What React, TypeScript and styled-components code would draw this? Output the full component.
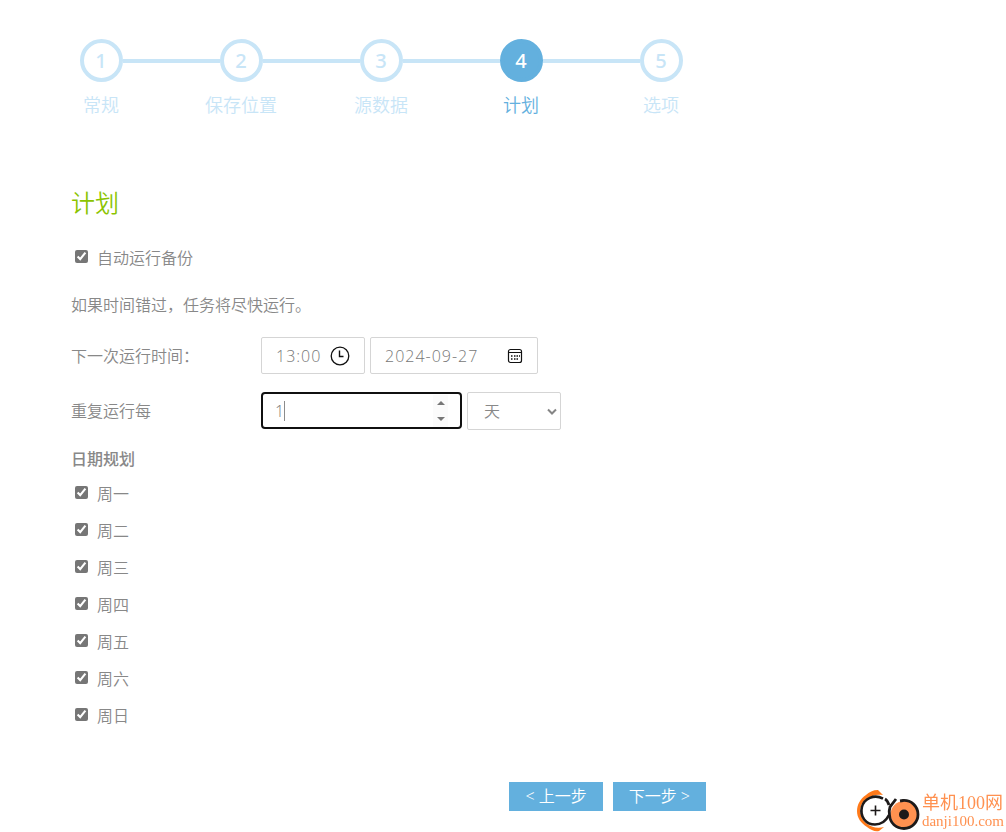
import React, { useState } from "react";
import styled, { createGlobalStyle, css } from "styled-components";

const GlobalStyle = createGlobalStyle`
  *, *::before, *::after { box-sizing: border-box; }
  body {
    margin: 0;
    background: #fff;
    color: #888;
    font-family: "Open Sans", "Noto Sans CJK SC", sans-serif;
    font-size: 16px;
    font-weight: 350;
    line-height: 24px;
  }
  button, input, select { font: inherit; color: inherit; }
`;

const Page = styled.div`
  min-height: 100vh;
  padding: 39px 31px 21px;
`;

const Steps = styled.ol`
  display: flex;
  max-width: 700px;
  margin: 0;
  padding: 0;
  list-style: none;
`;

const Step = styled.li<{ $active: boolean }>`
  flex: 1;
  text-align: center;
  font-size: 18px;
  color: ${(p) => (p.$active ? "#63b0de" : "#c8e5f7")};
`;

const Track = styled.div`
  display: flex;
  align-items: center;
  margin-bottom: 11px;
`;

const Line = styled.span<{ $hidden: boolean }>`
  flex: 1;
  height: 4px;
  background: ${(p) => (p.$hidden ? "transparent" : "#c8e5f7")};
`;

const Circle = styled.span<{ $active: boolean }>`
  width: 43px;
  height: 43px;
  border: 4px solid #c8e5f7;
  border-radius: 50%;
  font-family: "Noto Sans", "Open Sans", sans-serif;
  font-size: 20px;
  font-weight: 500;
  line-height: 35px;
  ${(p) =>
    p.$active &&
    css`
      border-color: #63b0de;
      background: #63b0de;
      color: #fff;
    `}
`;

const Form = styled.form`
  max-width: 675px;
  margin: 68px 0 0 40px;
`;

const Title = styled.h1`
  margin: 0 0 18px;
  color: #8bc400;
  font-size: 24px;
  font-weight: 350;
  line-height: 36px;
`;

const CheckLabel = styled.label`
  display: flex;
  align-items: center;
  height: 37px;
`;

const CheckBox = styled.input`
  width: 13px;
  height: 13px;
  margin: 0 9px 2px 4px;
  accent-color: #767676;
`;

const Note = styled.p`
  margin: 17px 0 20px;
`;

const Field = styled.div`
  display: flex;
  align-items: center;
  gap: 5px;
  height: 37px;
  margin-bottom: 18px;
`;

const FieldLabel = styled.label`
  width: 185px;
`;

const Box = styled.div<{ $width: number; $focused?: boolean }>`
  display: flex;
  align-items: center;
  width: ${(p) => p.$width}px;
  height: 37px;
  padding: 0 14px;
  border: 1px solid #d5d5d5;
  border-radius: 2px;
  color: #777;
  font-weight: 300;
  ${(p) =>
    p.$focused &&
    css`
      padding: 0 12px;
      border: 2px solid #101010;
      border-radius: 4px;
    `}
`;

const TextInput = styled.input<{ $spaced?: boolean }>`
  flex: 1;
  width: 100%;
  min-width: 0;
  padding: 0;
  border: 0;
  outline: 0;
  background: transparent;
  appearance: textfield;
  letter-spacing: ${(p) => (p.$spaced ? "1px" : "normal")};
  &::-webkit-inner-spin-button { display: none; }
`;

const NumberCell = styled.div`
  position: relative;
  display: flex;
  flex: 1;
  min-width: 0;
`;

const Caret = styled.span`
  position: absolute;
  left: 9px;
  top: 2px;
  width: 1px;
  height: 20px;
  background: #8c8c8c;
`;

const Spinner = styled.div`
  display: flex;
  flex: none;
  flex-direction: column;
  width: 15px;
  background: #fbfbfb;
`;

const IconButton = styled.button`
  display: flex;
  align-items: center;
  justify-content: center;
  padding: 0;
  border: 0;
  background: transparent;
  color: #111;
`;

const SpinButton = styled(IconButton)`
  height: 16px;
`;

const SpinArrow = styled.svg`
  display: block;
  flex: none;
  fill: #777;
`;

const SelectWrap = styled.div`
  position: relative;
  width: 94px;
`;

const Select = styled.select`
  display: block;
  width: 100%;
  height: 38px;
  padding: 0 16px;
  border: 1px solid #d5d5d5;
  border-radius: 2px;
  background: #fff;
  appearance: none;
`;

const Chevron = styled.svg`
  position: absolute;
  right: 4px;
  top: 16px;
  pointer-events: none;
`;

const Days = styled.fieldset`
  margin: 0;
  padding: 0;
  border: 0;
`;

const Legend = styled.legend`
  padding: 0 0 4px;
  font-weight: 500;
`;

const Actions = styled.div`
  display: flex;
  justify-content: flex-end;
  gap: 10px;
  margin: 48px 40px 0 0;
`;

const ActionButton = styled.button`
  height: 29px;
  padding: 0 16px;
  border: 0;
  background: #63b0de;
  color: #fff;
  line-height: 29px;
`;

const Brand = styled.a`
  position: fixed;
  right: 2px;
  bottom: 0;
  display: flex;
  align-items: center;
  gap: 2px;
  color: #ff9150;
  text-decoration: none;
`;

const BrandText = styled.span`
  display: flex;
  flex-direction: column;
  font-family: "Liberation Serif", "Noto Sans CJK SC", serif;
  font-weight: 400;
`;

const BrandName = styled.span`
  font-size: 18px;
  line-height: 20px;
`;

const BrandHost = styled.span`
  font-size: 15px;
  line-height: 17px;
`;

const steps = ["常规", "保存位置", "源数据", "计划", "选项"];
const days = ["周一", "周二", "周三", "周四", "周五", "周六", "周日"];
const ACTIVE = 3;

const ClockIcon = () => (
  <svg width="20" height="20" viewBox="0 0 20 20" fill="none" stroke="currentColor">
    <circle cx="10" cy="10" r="8.8" strokeWidth="1.3" />
    <path d="M9.5 4.5V10.5H13.5" strokeWidth="1.4" />
  </svg>
);

const CalendarIcon = () => (
  <svg width="16" height="16" viewBox="0 0 16 16" fill="none" stroke="currentColor">
    <rect x="1.5" y="1.5" width="13" height="13" rx="2" strokeWidth="1.2" />
    <path d="M1.5 4.5H14.5" />
    <path d="M7 8H8.5M9.500 8H11M12 8H13M4 8H5.500M4 11H5.500M7 11H8.500M9.500 11H11" strokeWidth="1.600" />
  </svg>
);

const BrandMark = () => (
  <svg width="63" height="42" viewBox="0 0 63 42" fill="none">
    <path
      d="M26 5L21 0C16 0 12 2 9 5C3 9 0 15 0 21C0 28 4 33 10 37C14 40 18 42 22 41L27 37C20 39 14 37 9 33C2 27 1 16 8 10C13 6 19 4 26 5Z"
      fill="#ff7a1a"
    />
    <circle cx="18.5" cy="20.5" r="14" fill="#fff" />
    <path
      d="M26 8.6C17 3.6 7 9 4.9 17C2.6 27 9 34.5 18 34.5C25 34.5 29 31 32 25"
      stroke="#1d1a1a"
      strokeWidth="2.6"
    />
    <path d="M18.5 15.5V25.5M13.5 20.5H23.5" stroke="#1d1a1a" strokeWidth="1.6" />
    <circle cx="47" cy="24.5" r="13.500" fill="#ff9150" />
    <path
      d="M28 9C30 10 31 12 32 15M39 9L33 17C32 20 32 22 32.5 25C33 33 39 38.5 47 38.5C55 38.5 61 32 61 24.5C61 16 54 10 46 10.5L43 11"
      stroke="#1d1a1a"
      strokeWidth="2.8"
    />
    <circle cx="47" cy="24.5" r="5" fill="#1d1a1a" />
  </svg>
);

export default function App() {
  const [count, setCount] = useState(1);
  return (
    <Page>
      <GlobalStyle />
      <Steps>
        {steps.map((name, i) => (
          <Step key={name} $active={i === ACTIVE} aria-current={i === ACTIVE ? "step" : undefined}>
            <Track>
              <Line $hidden={i === 0} />
              <Circle $active={i === ACTIVE}>{i + 1}</Circle>
              <Line $hidden={i === steps.length - 1} />
            </Track>
            {name}
          </Step>
        ))}
      </Steps>

      <Form onSubmit={(e) => e.preventDefault()}>
        <Title>计划</Title>
        <CheckLabel>
          <CheckBox type="checkbox" defaultChecked />
          自动运行备份
        </CheckLabel>
        <Note>如果时间错过，任务将尽快运行。</Note>

        <Field>
          <FieldLabel htmlFor="time">下一次运行时间：</FieldLabel>
          <Box $width={104}>
            <TextInput id="time" $spaced defaultValue="13:00" />
            <IconButton type="button" aria-label="选择时间"><ClockIcon /></IconButton>
          </Box>
          <Box $width={168}>
            <TextInput $spaced aria-label="日期" defaultValue="2024-09-27" />
            <IconButton type="button" aria-label="选择日期"><CalendarIcon /></IconButton>
          </Box>
        </Field>

        <Field>
          <FieldLabel htmlFor="every">重复运行每</FieldLabel>
          <Box $width={201} $focused>
            <NumberCell>
              <TextInput
                id="every"
                type="number"
                value={count}
                onChange={(e) => setCount(Number(e.target.value))}
              />
              <Caret />
            </NumberCell>
            <Spinner>
              <SpinButton type="button" aria-label="增加" onClick={() => setCount(count + 1)}>
                <SpinArrow width="8" height="4" viewBox="0 0 8 4"><path d="M0 4L4 0L8 4Z" /></SpinArrow>
              </SpinButton>
              <SpinButton type="button" aria-label="减少" onClick={() => setCount(count - 1)}>
                <SpinArrow width="8" height="4" viewBox="0 0 8 4"><path d="M0 0L4 4L8 0Z" /></SpinArrow>
              </SpinButton>
            </Spinner>
          </Box>
          <SelectWrap>
            <Select aria-label="周期" defaultValue="天">
              <option>天</option>
              <option>周</option>
              <option>月</option>
            </Select>
            <Chevron width="10" height="8" viewBox="0 0 10 8" fill="none">
              <path d="M1 1.5L5 5.5L9 1.5" stroke="#858585" strokeWidth="2" />
            </Chevron>
          </SelectWrap>
        </Field>

        <Days>
          <Legend>日期规划</Legend>
          {days.map((day) => (
            <CheckLabel key={day}>
              <CheckBox type="checkbox" defaultChecked />
              {day}
            </CheckLabel>
          ))}
        </Days>

        <Actions>
          <ActionButton type="button">&lt; 上一步</ActionButton>
          <ActionButton type="submit">下一步 &gt;</ActionButton>
        </Actions>
      </Form>

      <Brand href="#">
        <BrandMark />
        <BrandText>
          <BrandName>单机100网</BrandName>
          <BrandHost>danji100.com</BrandHost>
        </BrandText>
      </Brand>
    </Page>
  );
}
